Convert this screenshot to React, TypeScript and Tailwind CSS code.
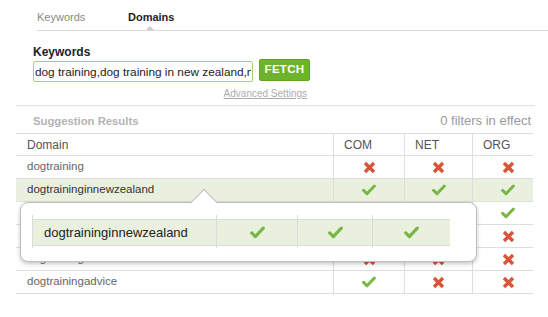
import React from "react";

/* -------------------------------------------------------------------------- */
/* Types & data                                                               */
/* -------------------------------------------------------------------------- */

type Status = "yes" | "no";

interface DomainRow {
  name: string;
  com: Status;
  net: Status;
  org: Status;
  active?: boolean;
}

const rows: DomainRow[] = [
  { name: "dogtraining", com: "no", net: "no", org: "no" },
  { name: "dogtraininginnewzealand", com: "yes", net: "yes", org: "yes", active: true },
  { name: "dogtrainingtips", com: "no", net: "no", org: "yes" },
  { name: "dogtrainingnz", com: "no", net: "no", org: "no" },
  { name: "dogtrainingschools", com: "no", net: "no", org: "no" },
  { name: "dogtrainingadvice", com: "yes", net: "no", org: "no" },
];

/* -------------------------------------------------------------------------- */
/* Icons                                                                      */
/* -------------------------------------------------------------------------- */

function CrossIcon() {
  return (
    <svg width="13" height="13" viewBox="0 0 13 13" aria-hidden>
      <path
        d="M2 2 L11 11 M11 2 L2 11"
        stroke="#d8553a"
        strokeWidth="3.4"
        strokeLinecap="butt"
        fill="none"
      />
    </svg>
  );
}

function CheckIcon({ size = 14 }: { size?: number }) {
  return (
    <svg width={size} height={Math.round(size * 0.85)} viewBox="0 0 14 12" aria-hidden>
      <path
        d="M1.6 6.4 L5 9.8 L12.4 2"
        stroke="#78b646"
        strokeWidth="3"
        strokeLinecap="round"
        strokeLinejoin="round"
        fill="none"
      />
    </svg>
  );
}

function Mark({ status }: { status: Status }) {
  return status === "yes" ? <CheckIcon /> : <CrossIcon />;
}

/* -------------------------------------------------------------------------- */
/* Popover                                                                    */
/* -------------------------------------------------------------------------- */

function DomainPopover({ row }: { row: DomainRow }) {
  const cols = [
    { w: "w-[81px]", s: row.com },
    { w: "w-[75px]", s: row.net },
    { w: "w-[78px]", s: row.org },
  ];
  return (
    <div className="absolute left-[20px] top-[202px] w-[457px] h-[60px] rounded-[8px] border border-[#bdbdbd] bg-white shadow-[0_2px_4px_rgba(0,0,0,0.22)]">
      {/* Arrow */}
      <div className="absolute left-[173px] top-[-10px] w-[20px] h-[20px] rotate-45 bg-white border-l border-t border-[#bdbdbd]" />

      <div className="relative flex h-[33px] mt-[12px] ml-[11px]">
        <div className="w-[184px] border-l border-[#dcdcdc] pt-[4px] pb-[2px]">
          <div className="flex h-full items-center bg-[#e9f1de] border-y border-[#dcdcdc] pl-[11px] text-[13px] text-[#222]">
            {row.name}
          </div>
        </div>
        {cols.map((c, i) => (
          <div key={i} className={`${c.w} border-l border-[#dcdcdc] pt-[4px] pb-[2px]`}>
            <div className="flex h-full items-center justify-center bg-[#e9f1de] border-y border-[#dcdcdc]">
              {c.s === "yes" ? <CheckIcon size={15} /> : <CrossIcon />}
            </div>
          </div>
        ))}
      </div>
    </div>
  );
}

/* -------------------------------------------------------------------------- */
/* Main Component                                                             */
/* -------------------------------------------------------------------------- */

export default function App() {
  const active = rows.find((r) => r.active)!;

  return (
    <div className="relative w-[548px] h-[317px] overflow-hidden bg-white font-['Liberation_Sans',Arial,sans-serif]">
      {/* Tabs */}
      <div className="relative ml-[37px] flex h-[31px] items-center border-b border-[#d9d9d9] pt-[4px] text-[11px]">
        <span className="w-[91px] text-[#8a8a8a]">Keywords</span>
        <span className="font-bold text-[#1e1e1e]">Domains</span>
        <span className="absolute bottom-0 left-[109px] h-0 w-0 border-x-[4px] border-b-[4px] border-x-transparent border-b-[#cfcfcf]" />
      </div>

      {/* Keyword form */}
      <div className="ml-[33px] w-[277px]">
        <div className="mt-[14px] h-[14px] text-[12px] leading-[14px] font-bold text-[#222]">
          Keywords
        </div>
        <div className="flex items-start">
          <input
            readOnly
            defaultValue="dog training,dog training in new zealand,new zealand dog training"
            className="mt-[2px] h-[21px] w-[220px] rounded-[2px] border border-[#a9d27c] px-[1px] text-[11.8px] text-[#222] outline-none"
          />
          <button
            type="button"
            className="ml-[6px] h-[22px] w-[51px] rounded-[2px] border border-[#62a524] bg-[#6db32c] text-[11.5px] font-bold tracking-[0.3px] text-white"
          >
            FETCH
          </button>
        </div>
        <div className="mt-[6px] pr-[3px] text-right text-[10px] leading-[12px] text-[#ababab] underline">
          Advanced Settings
        </div>
      </div>

      {/* Separator */}
      <div className="ml-[16px] mt-[5px] w-[519px] border-b border-[#e4e4e4] shadow-[0_1px_2px_rgba(0,0,0,0.07)]" />

      {/* Results heading */}
      <div className="ml-[33px] mt-[8px] flex h-[14px] w-[498px] items-center justify-between">
        <span className="text-[11.3px] font-bold text-[#b3b3b3]">Suggestion Results</span>
        <span className="text-[13px] text-[#9a9a9a]">0 filters in effect</span>
      </div>

      {/* Results table */}
      <div className="ml-[16px] mt-[5px] w-[517px] border-t border-[#dedede] text-[#666]">
        <div className="grid h-[22px] grid-cols-[317px_71px_68px_61px] border-b border-[#dedede] text-[12px] text-[#555]">
          <div className="flex items-center pl-[11px]">Domain</div>
          <div className="flex items-center border-l border-[#dedede] pl-[10px]">COM</div>
          <div className="flex items-center border-l border-[#dedede] pl-[10px]">NET</div>
          <div className="flex items-center border-l border-[#dedede] pl-[10px]">ORG</div>
        </div>
        {rows.map((r) => (
          <div
            key={r.name}
            className={`grid h-[23px] grid-cols-[317px_71px_68px_61px] border-b border-[#dedede] text-[11.5px] ${
              r.active ? "bg-[#e9f1de] text-[#333]" : "text-[#666]"
            }`}
          >
            <div className="flex items-center pl-[11px]">{r.name}</div>
            <div className="flex items-center justify-center border-l border-[#dedede]">
              <Mark status={r.com} />
            </div>
            <div className="flex items-center justify-center border-l border-[#dedede]">
              <Mark status={r.net} />
            </div>
            <div className="flex items-center justify-center border-l border-[#dedede] pl-[10px]">
              <Mark status={r.org} />
            </div>
          </div>
        ))}
      </div>

      <DomainPopover row={active} />
    </div>
  );
}
